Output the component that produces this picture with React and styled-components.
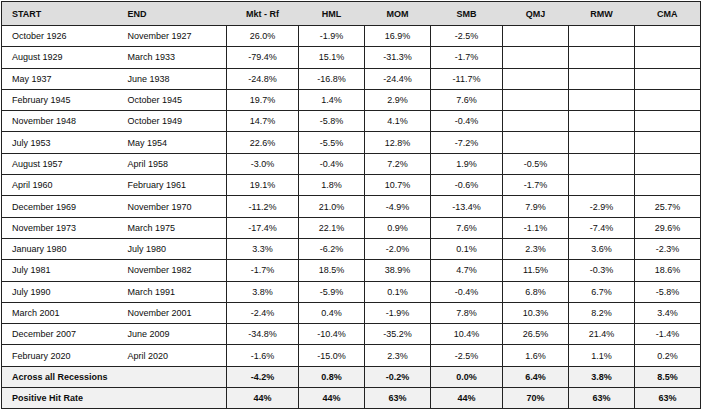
import React from "react";
import styled, { createGlobalStyle } from "styled-components";

const Global = createGlobalStyle`
  html, body { margin: 0; padding: 0; background: #ffffff; }
  body { font-family: "Liberation Sans", Arial, sans-serif; }
`;

const Wrap = styled.div`
  padding: 1px 0 0 1px;
`;

const Table = styled.table`
  border-collapse: collapse;
  table-layout: fixed;
  width: 700px;
  font-family: "Liberation Sans", Arial, sans-serif;
  font-size: 9px;
  color: #0d0d0d;
  border: 1px solid #222222;
`;

const HeadRow = styled.tr`
  height: 24px;
  background: #dedede;
  border-bottom: 1px solid #222222;
`;

const Th = styled.th`
  padding: 0 ${(p) => (p.$left ? "10px" : "0")};
  text-align: ${(p) => (p.$left ? "left" : "center")};
  font-weight: bold;
  vertical-align: middle;
`;

const Row = styled.tr`
  height: 21.3px;
  background: ${(p) => (p.$summary ? "#f1f1f1" : "#ffffff")};
  border-bottom: 1px solid #222222;
  font-weight: ${(p) => (p.$summary ? "bold" : "normal")};
`;

const Td = styled.td`
  padding: 0 ${(p) => (p.$left ? "10px" : "0")};
  text-align: ${(p) => (p.$left ? "left" : "center")};
  border-right: ${(p) => (p.$noRight ? "none" : "1px solid #222222")};
  vertical-align: middle;
  white-space: nowrap;
`;

const widths = [116, 109, 72, 66, 66, 72, 66, 66, 66];
const factors = ["Mkt - Rf", "HML", "MOM", "SMB", "QMJ", "RMW", "CMA"];

const rows = [
  ["October 1926", "November 1927", "26.0%", "-1.9%", "16.9%", "-2.5%", "", "", ""],
  ["August 1929", "March 1933", "-79.4%", "15.1%", "-31.3%", "-1.7%", "", "", ""],
  ["May 1937", "June 1938", "-24.8%", "-16.8%", "-24.4%", "-11.7%", "", "", ""],
  ["February 1945", "October 1945", "19.7%", "1.4%", "2.9%", "7.6%", "", "", ""],
  ["November 1948", "October 1949", "14.7%", "-5.8%", "4.1%", "-0.4%", "", "", ""],
  ["July 1953", "May 1954", "22.6%", "-5.5%", "12.8%", "-7.2%", "", "", ""],
  ["August 1957", "April 1958", "-3.0%", "-0.4%", "7.2%", "1.9%", "-0.5%", "", ""],
  ["April 1960", "February 1961", "19.1%", "1.8%", "10.7%", "-0.6%", "-1.7%", "", ""],
  ["December 1969", "November 1970", "-11.2%", "21.0%", "-4.9%", "-13.4%", "7.9%", "-2.9%", "25.7%"],
  ["November 1973", "March 1975", "-17.4%", "22.1%", "0.9%", "7.6%", "-1.1%", "-7.4%", "29.6%"],
  ["January 1980", "July 1980", "3.3%", "-6.2%", "-2.0%", "0.1%", "2.3%", "3.6%", "-2.3%"],
  ["July 1981", "November 1982", "-1.7%", "18.5%", "38.9%", "4.7%", "11.5%", "-0.3%", "18.6%"],
  ["July 1990", "March 1991", "3.8%", "-5.9%", "0.1%", "-0.4%", "6.8%", "6.7%", "-5.8%"],
  ["March 2001", "November 2001", "-2.4%", "0.4%", "-1.9%", "7.8%", "10.3%", "8.2%", "3.4%"],
  ["December 2007", "June 2009", "-34.8%", "-10.4%", "-35.2%", "10.4%", "26.5%", "21.4%", "-1.4%"],
  ["February 2020", "April 2020", "-1.6%", "-15.0%", "2.3%", "-2.5%", "1.6%", "1.1%", "0.2%"],
];

const summary = [
  ["Across all Recessions", "-4.2%", "0.8%", "-0.2%", "0.0%", "6.4%", "3.8%", "8.5%"],
  ["Positive Hit Rate", "44%", "44%", "63%", "44%", "70%", "63%", "63%"],
];

export default function App() {
  return (
    <Wrap>
      <Global />
      <Table>
        <colgroup>
          {widths.map((w, i) => (
            <col key={i} style={{ width: w }} />
          ))}
        </colgroup>
        <thead>
          <HeadRow>
            <Th $left>START</Th>
            <Th $left>END</Th>
            {factors.map((f) => (
              <Th key={f}>{f}</Th>
            ))}
          </HeadRow>
        </thead>
        <tbody>
          {rows.map((r) => (
            <Row key={r[0]}>
              <Td $left $noRight>{r[0]}</Td>
              <Td $left>{r[1]}</Td>
              {r.slice(2).map((v, i) => (
                <Td key={i}>{v}</Td>
              ))}
            </Row>
          ))}
          {summary.map((r) => (
            <Row key={r[0]} $summary>
              <Td $left colSpan={2}>{r[0]}</Td>
              {r.slice(1).map((v, i) => (
                <Td key={i}>{v}</Td>
              ))}
            </Row>
          ))}
        </tbody>
      </Table>
    </Wrap>
  );
}
